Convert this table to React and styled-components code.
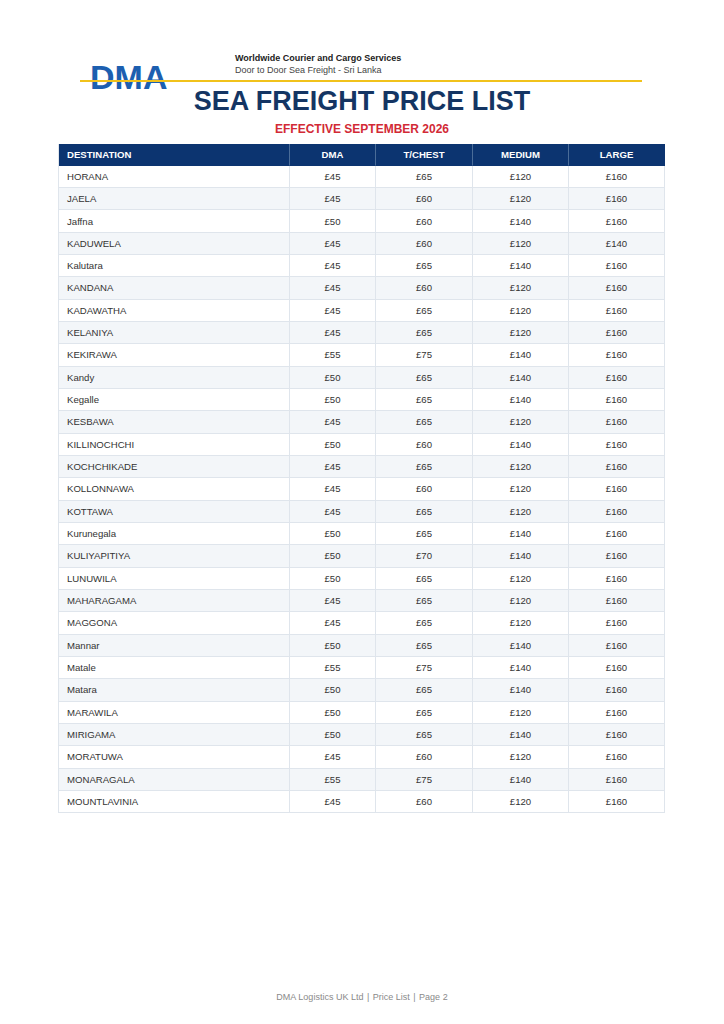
import React from "react";
import styled, { createGlobalStyle } from "styled-components";

const rows = [
  ["HORANA", 45, 65, 120, 160],
  ["JAELA", 45, 60, 120, 160],
  ["Jaffna", 50, 60, 140, 160],
  ["KADUWELA", 45, 60, 120, 140],
  ["Kalutara", 45, 65, 140, 160],
  ["KANDANA", 45, 60, 120, 160],
  ["KADAWATHA", 45, 65, 120, 160],
  ["KELANIYA", 45, 65, 120, 160],
  ["KEKIRAWA", 55, 75, 140, 160],
  ["Kandy", 50, 65, 140, 160],
  ["Kegalle", 50, 65, 140, 160],
  ["KESBAWA", 45, 65, 120, 160],
  ["KILLINOCHCHI", 50, 60, 140, 160],
  ["KOCHCHIKADE", 45, 65, 120, 160],
  ["KOLLONNAWA", 45, 60, 120, 160],
  ["KOTTAWA", 45, 65, 120, 160],
  ["Kurunegala", 50, 65, 140, 160],
  ["KULIYAPITIYA", 50, 70, 140, 160],
  ["LUNUWILA", 50, 65, 120, 160],
  ["MAHARAGAMA", 45, 65, 120, 160],
  ["MAGGONA", 45, 65, 120, 160],
  ["Mannar", 50, 65, 140, 160],
  ["Matale", 55, 75, 140, 160],
  ["Matara", 50, 65, 140, 160],
  ["MARAWILA", 50, 65, 120, 160],
  ["MIRIGAMA", 50, 65, 140, 160],
  ["MORATUWA", 45, 60, 120, 160],
  ["MONARAGALA", 55, 75, 140, 160],
  ["MOUNTLAVINIA", 45, 60, 120, 160],
];

const columns = ["DESTINATION", "DMA", "T/CHEST", "MEDIUM", "LARGE"];

const GlobalStyle = createGlobalStyle`
  html, body {
    margin: 0;
    padding: 0;
    background: #ffffff;
  }
  body {
    font-family: "Liberation Sans", Arial, sans-serif;
  }
`;

const Page = styled.div`
  width: 724px;
  height: 1024px;
  display: flex;
  flex-direction: column;
  padding-top: 52px;
  box-sizing: border-box;
`;

// yellow rule runs across the logo, so it sits on top
const Masthead = styled.div`
  position: relative;
  display: flex;
  align-items: flex-start;
  height: 35px;
  margin: 0 82px 0 80px;
  padding-left: 10px;

  &::after {
    content: "";
    position: absolute;
    left: 0;
    right: 0;
    top: 28px;
    height: 2px;
    background: #f1c21b;
  }
`;

const Logo = styled.div`
  flex: 0 0 145px;
  margin-top: 8px;
  font-size: 34px;
  line-height: 34px;
  font-weight: 700;
  color: #1c5fb0;
`;

const Tagline = styled.div`
  font-size: 9px;
  line-height: 12px;
  color: #454545;
`;

const TaglineStrong = styled.div`
  font-weight: 700;
  color: #222;
`;

const Title = styled.h1`
  margin: 0;
  text-align: center;
  font-size: 27px;
  line-height: 1.1;
  font-weight: 700;
  color: #143563;
`;

const Effective = styled.div`
  margin-top: 5px;
  text-align: center;
  font-size: 12px;
  line-height: 14px;
  font-weight: 700;
  color: #d22a36;
`;

const Table = styled.div`
  margin: 8px 59px 0 58px;
  border-left: 1px solid #dfe5ec;
`;

const Row = styled.div`
  display: grid;
  grid-template-columns: 231px 86px 97px 96px 96px;
  height: ${(p) => (p.head ? "22px" : "22.33px")};
  background: ${(p) => (p.head ? "#0c3470" : p.striped ? "#f3f6f9" : "#ffffff")};
`;

const Cell = styled.div`
  display: flex;
  align-items: center;
  justify-content: ${(p) => (p.left ? "flex-start" : "center")};
  padding-left: ${(p) => (p.left ? "8px" : "0")};
  box-sizing: border-box;
  border-right: 1px solid ${(p) => (p.head ? "#4a6c98" : "#dfe5ec")};
  border-bottom: 1px solid ${(p) => (p.head ? "#0c3470" : "#dfe5ec")};
  font-size: 9.6px;
  font-weight: ${(p) => (p.head ? 700 : 400)};
  color: ${(p) => (p.head ? "#ffffff" : "#333333")};
  white-space: nowrap;

  &:last-child {
    border-right-color: ${(p) => (p.head ? "#0c3470" : "#dfe5ec")};
  }
`;

const Footer = styled.div`
  margin-top: auto;
  padding-bottom: 21px;
  text-align: center;
  font-size: 9px;
  line-height: 12px;
  color: #8a8a8a;
`;

const Pipe = styled.span`
  margin: 0 1px;
`;

export default function App() {
  return (
    <>
      <GlobalStyle />
      <Page>
        <Masthead>
          <Logo>DMA</Logo>
          <Tagline>
            <TaglineStrong>Worldwide Courier and Cargo Services</TaglineStrong>
            <div>Door to Door Sea Freight - Sri Lanka</div>
          </Tagline>
        </Masthead>
        <Title>SEA FREIGHT PRICE LIST</Title>
        <Effective>EFFECTIVE SEPTEMBER 2026</Effective>

        <Table>
          <Row head>
            {columns.map((c, i) => (
              <Cell head left={i === 0} key={c}>
                {c}
              </Cell>
            ))}
          </Row>
          {rows.map((r, i) => (
            <Row key={r[0]} striped={i % 2 === 1}>
              <Cell left>{r[0]}</Cell>
              {r.slice(1).map((v, j) => (
                <Cell key={j}>£{v}</Cell>
              ))}
            </Row>
          ))}
        </Table>

        <Footer>
          DMA Logistics UK Ltd <Pipe>|</Pipe> Price List <Pipe>|</Pipe> Page 2
        </Footer>
      </Page>
    </>
  );
}
